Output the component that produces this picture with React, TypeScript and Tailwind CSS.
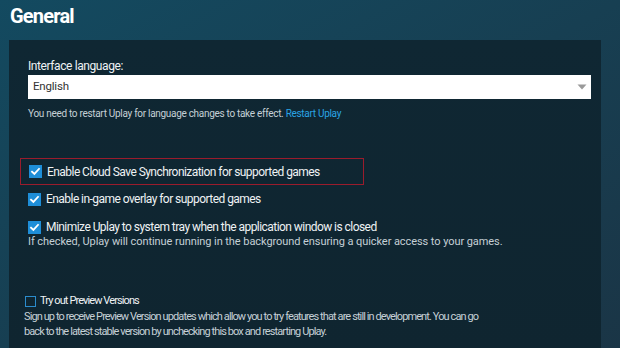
import React from "react";

function Check({ checked }: { checked: boolean }) {
  if (!checked) {
    return <span className="block w-[11px] h-[11px] border-[1.5px] border-[#2b8ccc] shrink-0" />;
  }
  return (
    <span className="flex items-center justify-center w-[13px] h-[13px] bg-[#1e8ed8] shrink-0">
      <svg width="11" height="11" viewBox="0 0 12 12">
        <path d="M2.2 6.2 L4.8 8.7 L9.8 3.2" fill="none" stroke="#ffffff" strokeWidth="2" strokeLinecap="square" />
      </svg>
    </span>
  );
}

export default function App() {
  return (
    <div
      className="w-[620px] h-[348px] overflow-hidden bg-gradient-to-br from-[#134a60] via-[#173f52] to-[#1a3546] text-[#e6ecef]"
      style={{ fontFamily: "Roboto, 'Noto Sans', sans-serif" }}
    >
      <div className="h-[40px] pl-[10px] pt-[3px]">
        <h1 className="text-[20px] font-bold leading-[26px] text-white tracking-[-0.8px]">General</h1>
      </div>
      <div className="ml-[9px] w-[592px] h-[308px] bg-gradient-to-b from-[#0f2733] to-[#0f2530] pl-[19px] pr-[10px] pt-[18px]">
        <div className="text-[12px] leading-[16px] text-[#eef2f4] tracking-[-0.4px]">Interface language:</div>
        <div className="mt-[1px] w-[563px] h-[24px] bg-white flex items-center justify-between pl-[5px] pr-[4px]">
          <span className="text-[11.5px] text-[#333] tracking-[-0.2px]">English</span>
          <svg width="10" height="6" viewBox="0 0 10 6">
            <path d="M0.5 0.5 L9.5 0.5 L5 5.5 Z" fill="#9a9a9a" />
          </svg>
        </div>
        <div className="mt-[8px] text-[10px] leading-[14px] text-[#c5d0d6] tracking-[-0.3px]">
          You need to restart Uplay for language changes to take effect.{" "}
          <span className="text-[#2aa4e4]">Restart Uplay</span>
        </div>
        <div className="mt-[37px] -ml-[8px] w-[344px] h-[27px] border border-[#9a1c2c] flex items-center gap-[5px] pl-[8px]">
          <Check checked />
          <span className="text-[12px] leading-[16px] text-[#eef2f4] tracking-[-0.55px]">Enable Cloud Save Synchronization for supported games</span>
        </div>
        <div className="mt-[6px] flex items-center gap-[5px] h-[16px]">
          <Check checked />
          <span className="text-[12px] leading-[16px] text-[#eef2f4] tracking-[-0.55px]">Enable in-game overlay for supported games</span>
        </div>
        <div className="mt-[12px] flex items-center gap-[5px] h-[16px]">
          <Check checked />
          <span className="text-[12px] leading-[16px] text-[#eef2f4] tracking-[-0.55px]">Minimize Uplay to system tray when the application window is closed</span>
        </div>
        <div className="mt-[-1px] text-[11px] leading-[15px] text-[#c5d0d6] tracking-[-0.07px]">
          If checked, Uplay will continue running in the background ensuring a quicker access to your games.
        </div>
        <div className="-ml-[4px] mt-[44px] flex items-center gap-[4px] h-[16px] pl-[1px]">
          <Check checked={false} />
          <span className="text-[11px] leading-[16px] text-[#eef2f4] tracking-[-0.9px]">Try out Preview Versions</span>
        </div>
        <div className="-ml-[4px] w-[520px] text-[11px] leading-[15px] text-[#c5d0d6] tracking-[-0.9px]">
          Sign up to receive Preview Version updates which allow you to try features that are still in development. You can go
          <br />
          back to the latest stable version by unchecking this box and restarting Uplay.
        </div>
      </div>
    </div>
  );
}
